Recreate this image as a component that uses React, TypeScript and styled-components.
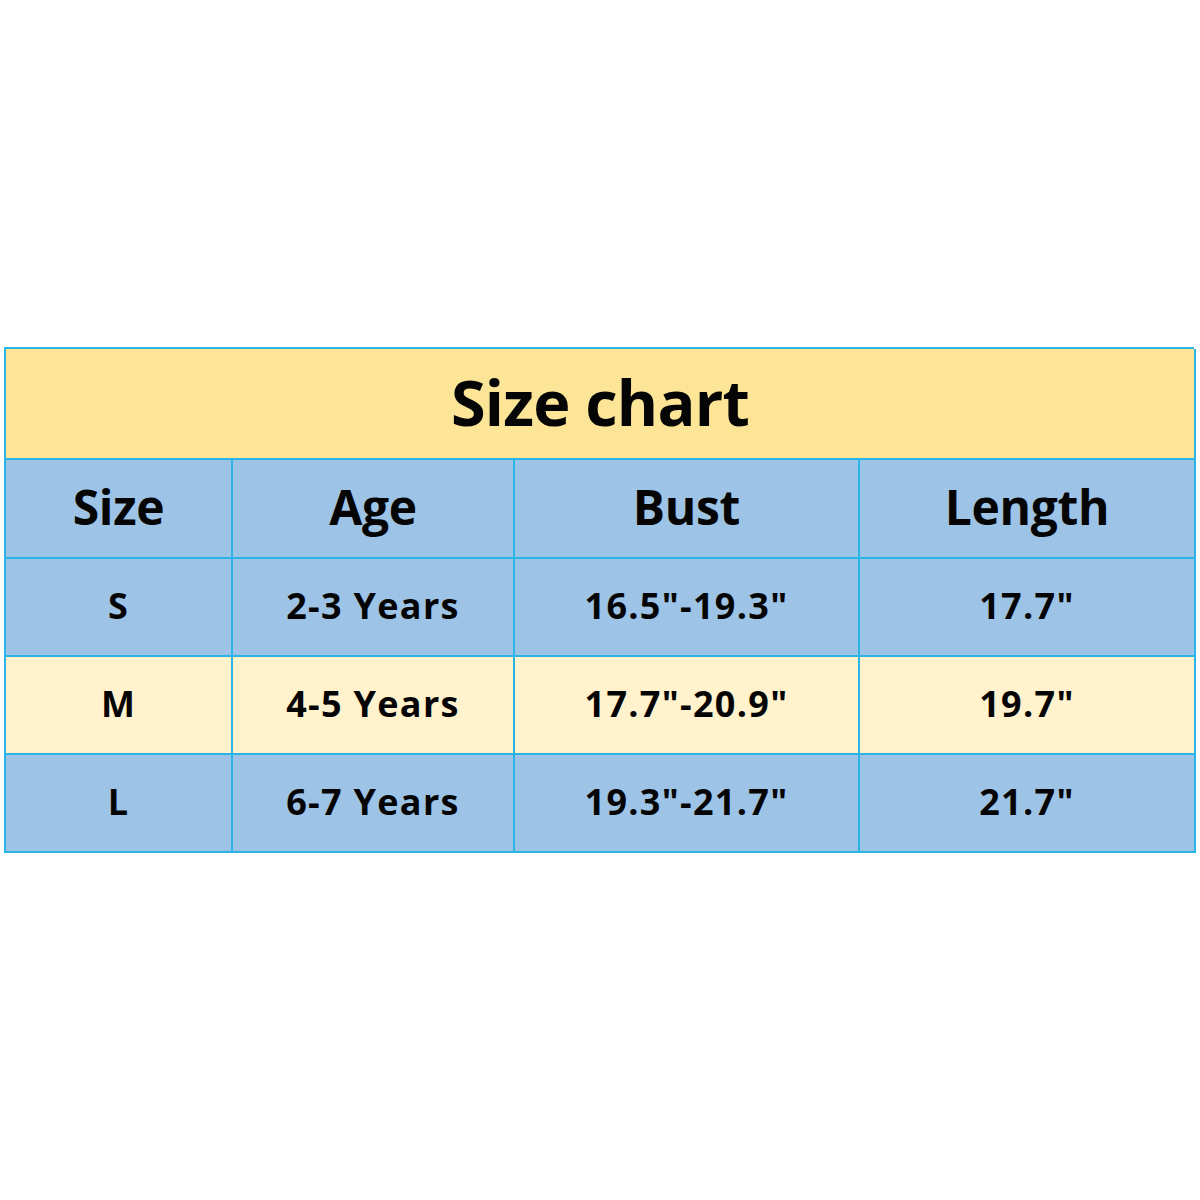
import React from 'react'
import styled, { createGlobalStyle } from 'styled-components'

const GlobalStyle = createGlobalStyle`
  html, body {
    margin: 0;
    padding: 0;
    background: #ffffff;
  }
  body {
    font-family: 'Open Sans', 'Liberation Sans', sans-serif;
  }
`

const Page = styled.div`
  width: 1200px;
  height: 1200px;
  padding: 347px 0 0 4px;
  box-sizing: border-box;
`

const Chart = styled.div`
  display: grid;
  grid-template-columns: 227px 282px 345px 336px;
  width: 1190px;
  border-top: 2px solid #2bb5e6;
  border-left: 2px solid #2bb5e6;
  box-sizing: border-box;
`

const Title = styled.div`
  grid-column: 1 / -1;
  height: 111px;
  background: #fde598;
  border-right: 2px solid #2bb5e6;
  border-bottom: 2px solid #2bb5e6;
  display: flex;
  align-items: center;
  justify-content: center;
  font-size: 63px;
  font-weight: 700;
  color: #050505;
  letter-spacing: -0.8px;
  box-sizing: border-box;
  padding-bottom: 4px;
`

const Cell = styled.div<{ $tone: 'blue' | 'cream'; $head?: boolean }>`
  height: ${(p) => (p.$head ? '99px' : '98px')};
  background: ${(p) => (p.$tone === 'blue' ? '#9dc3e6' : '#fff2cc')};
  border-right: 2px solid #2bb5e6;
  border-bottom: 2px solid #2bb5e6;
  display: flex;
  align-items: center;
  justify-content: center;
  box-sizing: border-box;
  font-size: ${(p) => (p.$head ? '48px' : '36px')};
  font-weight: 700;
  color: #050505;
  letter-spacing: ${(p) => (p.$head ? '-0.3px' : '1.3px')};
  padding-bottom: 4px;
`

const headers = ['Size', 'Age', 'Bust', 'Length']

const rows = [
  { size: 'S', age: '2-3 Years', bust: '16.5"-19.3"', length: '17.7"', tone: 'blue' as const },
  { size: 'M', age: '4-5 Years', bust: '17.7"-20.9"', length: '19.7"', tone: 'cream' as const },
  { size: 'L', age: '6-7 Years', bust: '19.3"-21.7"', length: '21.7"', tone: 'blue' as const },
]

export default function App() {
  return (
    <>
      <GlobalStyle />
      <Page>
        <Chart>
          <Title>Size chart</Title>
          {headers.map((h) => (
            <Cell key={h} $tone="blue" $head>
              {h}
            </Cell>
          ))}
          {rows.map((r) => (
            <React.Fragment key={r.size}>
              <Cell $tone={r.tone}>{r.size}</Cell>
              <Cell $tone={r.tone}>{r.age}</Cell>
              <Cell $tone={r.tone}>{r.bust}</Cell>
              <Cell $tone={r.tone}>{r.length}</Cell>
            </React.Fragment>
          ))}
        </Chart>
      </Page>
    </>
  )
}
